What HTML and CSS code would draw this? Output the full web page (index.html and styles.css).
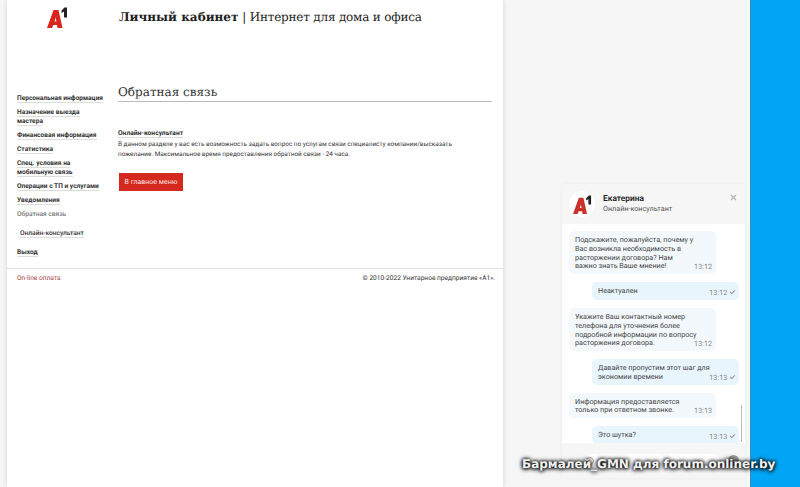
FILE: index.html
```html
<!DOCTYPE html>
<html lang="ru">
<head>
    <meta charset="UTF-8">
    <title>Личный кабинет</title>
    <link rel="stylesheet" href="styles.css">
</head>
<body>
    <div class="page">
        <div class="top">
            <div class="logo-box">
                <svg class="logo" width="21" height="21" viewBox="0 0 21 21">
                    <path fill-rule="evenodd" d="M0 21 L6.5 3 L11.5 3 L15.5 21 L10.6 21 L10 18 L6.4 18 L5 21 Z M7.6 14.5 L9.4 14.5 L8.8 10.5 Z" fill="#d9261c"/>
                    <path d="M14.5 3.5 L17.5 0.5 L20 0.5 L20 10.5 L17 10.5 L17 4.5 L14.5 6 Z" fill="#222"/>
                </svg>
            </div>
            <div class="site-title"><b>Личный кабинет</b> <span>| Интернет для дома и офиса</span></div>
        </div>
        <div class="middle">
            <ul class="menu">
                <li><a href="#">Персональная информация</a></li>
                <li><a href="#">Назначение выезда мастера</a></li>
                <li><a href="#">Финансовая информация</a></li>
                <li><a href="#">Статистика</a></li>
                <li><a href="#">Спец. условия на мобильную связь</a></li>
                <li><a href="#">Операции с ТП и услугами</a></li>
                <li><a href="#">Уведомления</a></li>
                <li class="current">Обратная связь</li>
                <li class="sub"><a href="#">Онлайн-консультант</a></li>
                <li><a href="#">Выход</a></li>
            </ul>
            <div class="content">
                <h1>Обратная связь</h1>
                <h2><span>Онлайн-консультант</span></h2>
                <p>В данном разделе у вас есть возможность задать вопрос по услугам связи специалисту компании/высказать пожелание. Максимальное время предоставления обратной связи - 24 часа.</p>
                <a class="btn" href="#">В главное меню</a>
            </div>
        </div>
        <div class="footer">
            <a href="#">On-line оплата</a>
            <span>© 2010-2022 Унитарное предприятие «А1».</span>
        </div>
    </div>
    <div class="side">
        <div class="chat">
            <div class="chat-head">
                <div class="avatar">
                    <svg width="19" height="19" viewBox="0 0 21 21">
                        <path fill-rule="evenodd" d="M0 21 L6.5 3 L11.5 3 L15.5 21 L10.6 21 L10 18 L6.4 18 L5 21 Z M7.6 14.5 L9.4 14.5 L8.8 10.5 Z" fill="#c8322a"/>
                        <path d="M14.5 3.5 L17.5 0.5 L20 0.5 L20 10.5 L17 10.5 L17 4.5 L14.5 6 Z" fill="#222"/>
                    </svg>
                </div>
                <div class="who">
                    <b>Екатерина</b>
                    <span>Онлайн-консультант</span>
                </div>
                <svg class="close" width="7" height="7" viewBox="0 0 7 7">
                    <path d="M1 1 L6 6 M6 1 L1 6" stroke="#b4b4b4" stroke-width="1.2"/>
                </svg>
            </div>
            <div class="messages">
                <div class="msg in">Подскажите, пожалуйста, почему у Вас возникла необходимость в расторжении договора? Нам<br>важно знать Ваше мнение!<time>13:12</time></div>
                <div class="msg out short">Неактуален<time>13:12 <i class="tick"></i></time></div>
                <div class="msg in">Укажите Ваш контактный номер телефона для уточнения более подробной информации по вопросу расторжения договора.<time>13:12</time></div>
                <div class="msg out">Давайте пропустим этот шаг для экономии времени<time>13:13 <i class="tick"></i></time></div>
                <div class="msg in">Информация предоставляется только при ответном звонке.<time>13:13</time></div>
                <div class="msg out short">Это шутка?<time>13:13 <i class="tick"></i></time></div>
                <div class="scroll"></div>
            </div>
            <div class="chat-input">
                <div class="field"><i class="clip"></i></div>
                <div class="send"></div>
            </div>
        </div>
    </div>
    <div class="blue"></div>
    <div class="watermark">Бармалей_GMN для forum.onliner.by</div>
</body>
</html>
```

FILE: styles.css
```css
html, body {
    margin: 0;
    padding: 0;
    height: 487px;
    overflow: hidden;
}
body {
    display: flex;
    background-color: #f6f6f6;
    font-family: Roboto, "Liberation Sans", sans-serif;
    color: #333;
    font-size: 6.6px;
    padding-left: 7px;
    box-sizing: border-box;
    text-rendering: geometricPrecision;
}
a {
    color: inherit;
    text-decoration: none;
}

/* left white page */
.page {
    width: 496px;
    height: 487px;
    flex: none;
    background-color: white;
    box-shadow: 0 0 5px rgba(0, 0, 0, 0.14);
}
.top {
    display: flex;
    height: 83px;
}
.logo-box {
    width: 112px;
    padding: 7px 0 0 40px;
    box-sizing: border-box;
}
.site-title {
    font-family: "DejaVu Serif", serif;
    font-size: 12px;
    line-height: 17px;
    padding-top: 9px;
    color: #222;
    white-space: nowrap;
}
.site-title span {
    letter-spacing: -0.2px;
}
.middle {
    display: flex;
    height: 185px;
}

/* menu */
.menu {
    list-style: none;
    margin: 0 13px 0 0;
    padding: 11px 0 0 10px;
    width: 88px;
    flex: none;
}
.menu li {
    font-weight: 700;
    line-height: 9px;
    margin-bottom: 5px;
    color: #333;
}
.menu li a {
    border-bottom: 1px solid #ddd;
}
.menu .current {
    color: #777;
    font-weight: 500;
    margin-bottom: 10px;
}
.menu .sub {
    padding-left: 3px;
    font-weight: 500;
    margin-bottom: 10px;
}

/* main column */
.content {
    width: 374px;
}
.content h1 {
    font-family: "DejaVu Serif", serif;
    font-weight: 400;
    font-size: 12px;
    line-height: 18px;
    margin: 0;
    border-bottom: 1px solid #bbb;
    color: #333;
}
.content h2 {
    font-size: 6.7px;
    font-weight: 700;
    line-height: 10px;
    margin: 26px 0 2px 0;
}
.content h2 span {
    border-bottom: 1px solid #ddd;
}
.content p {
    font-size: 6.4px;
    line-height: 9.5px;
    margin: 0 0 14px 0;
    width: 345px;
}
.btn {
    display: block;
    width: 64px;
    height: 18px;
    line-height: 18px;
    margin-left: 1px;
    text-align: center;
    background-color: #d5281e;
    color: #fbe5e3;
    font-size: 7px;
}

/* footer */
.footer {
    display: flex;
    justify-content: space-between;
    border-top: 1px solid #e2e2e2;
    padding: 4px 8px 0 10px;
    line-height: 10px;
}
.footer a {
    color: #a0443e;
}

/* right side with chat */
.side {
    width: 247px;
    height: 487px;
    flex: none;
    padding: 184px 0 0 59px;
    box-sizing: border-box;
}
.chat {
    width: 183px;
    height: 294px;
    background-color: white;
    box-shadow: 0 0 4px rgba(0, 0, 0, 0.05);
}
.chat-head {
    display: flex;
    align-items: center;
    height: 40px;
    padding-left: 7px;
    background-color: #f6f6f6;
}
.avatar {
    width: 26px;
    height: 26px;
    border-radius: 50%;
    background-color: white;
    display: flex;
    align-items: center;
    justify-content: center;
    flex: none;
}
.who {
    margin-left: 8px;
    display: flex;
    flex-direction: column;
    line-height: 9px;
    font-size: 7.2px;
    color: #555;
    flex: 1;
}
.who b {
    font-size: 8.4px;
    font-weight: 600;
    color: #222;
}
.close {
    margin: 0 8px 14px 0;
}
.messages {
    position: relative;
    height: 219px;
    box-sizing: border-box;
    overflow: hidden;
    padding: 7px 6px 0 7px;
    display: flex;
    flex-direction: column;
    gap: 8px;
}
.msg {
    position: relative;
    flex: none;
    box-sizing: border-box;
    width: 147px;
    font-size: 7.2px;
    line-height: 8.75px;
    color: #444;
    border-radius: 5px;
    padding: 5px 15px 3px 6px;
}
.msg time {
    position: absolute;
    right: 4px;
    bottom: 2px;
    font-size: 7.2px;
    color: #888;
}
.msg.in {
    background-color: #f3f8fc;
}
.msg.out {
    margin-left: 23px;
    background-color: #e8f5fd;
}
.msg.short {
    height: 18px;
    padding-top: 5px;
}
.tick {
    display: inline-block;
    width: 4px;
    height: 2px;
    border-left: 1px solid #999;
    border-bottom: 1px solid #999;
    transform: rotate(-45deg);
    margin: 0 0 2px 1px;
}
.scroll {
    position: absolute;
    right: 3px;
    top: 181px;
    width: 1px;
    height: 37px;
    background-color: #bbb;
}
.chat-input {
    display: flex;
    align-items: center;
    height: 35px;
    background-color: #f6f6f6;
    padding: 0 6px 0 21px;
    gap: 8px;
    box-sizing: border-box;
}
.field {
    flex: 1;
    height: 14px;
    background-color: white;
    border-radius: 7px;
    display: flex;
    align-items: center;
    padding-left: 3px;
}
.clip {
    width: 6px;
    height: 6px;
    border-radius: 50%;
    border: 1px solid #aaa;
}
.send {
    width: 11px;
    height: 11px;
    border-radius: 50%;
    background-color: #999;
}

/* desktop strip */
.blue {
    flex: 1;
    height: 487px;
    background-color: #00a6f6;
    border-left: 1px solid #3f88b8;
}

/* forum watermark over everything */
.watermark {
    position: absolute;
    left: 522px;
    top: 457px;
    font-family: "DejaVu Sans", sans-serif;
    font-weight: 700;
    font-size: 12px;
    line-height: 14px;
    color: #f2f2f2;
    text-shadow: 0 0 3px #000, 0 0 5px #000, 0 1px 4px #000;
    white-space: nowrap;
}
```
